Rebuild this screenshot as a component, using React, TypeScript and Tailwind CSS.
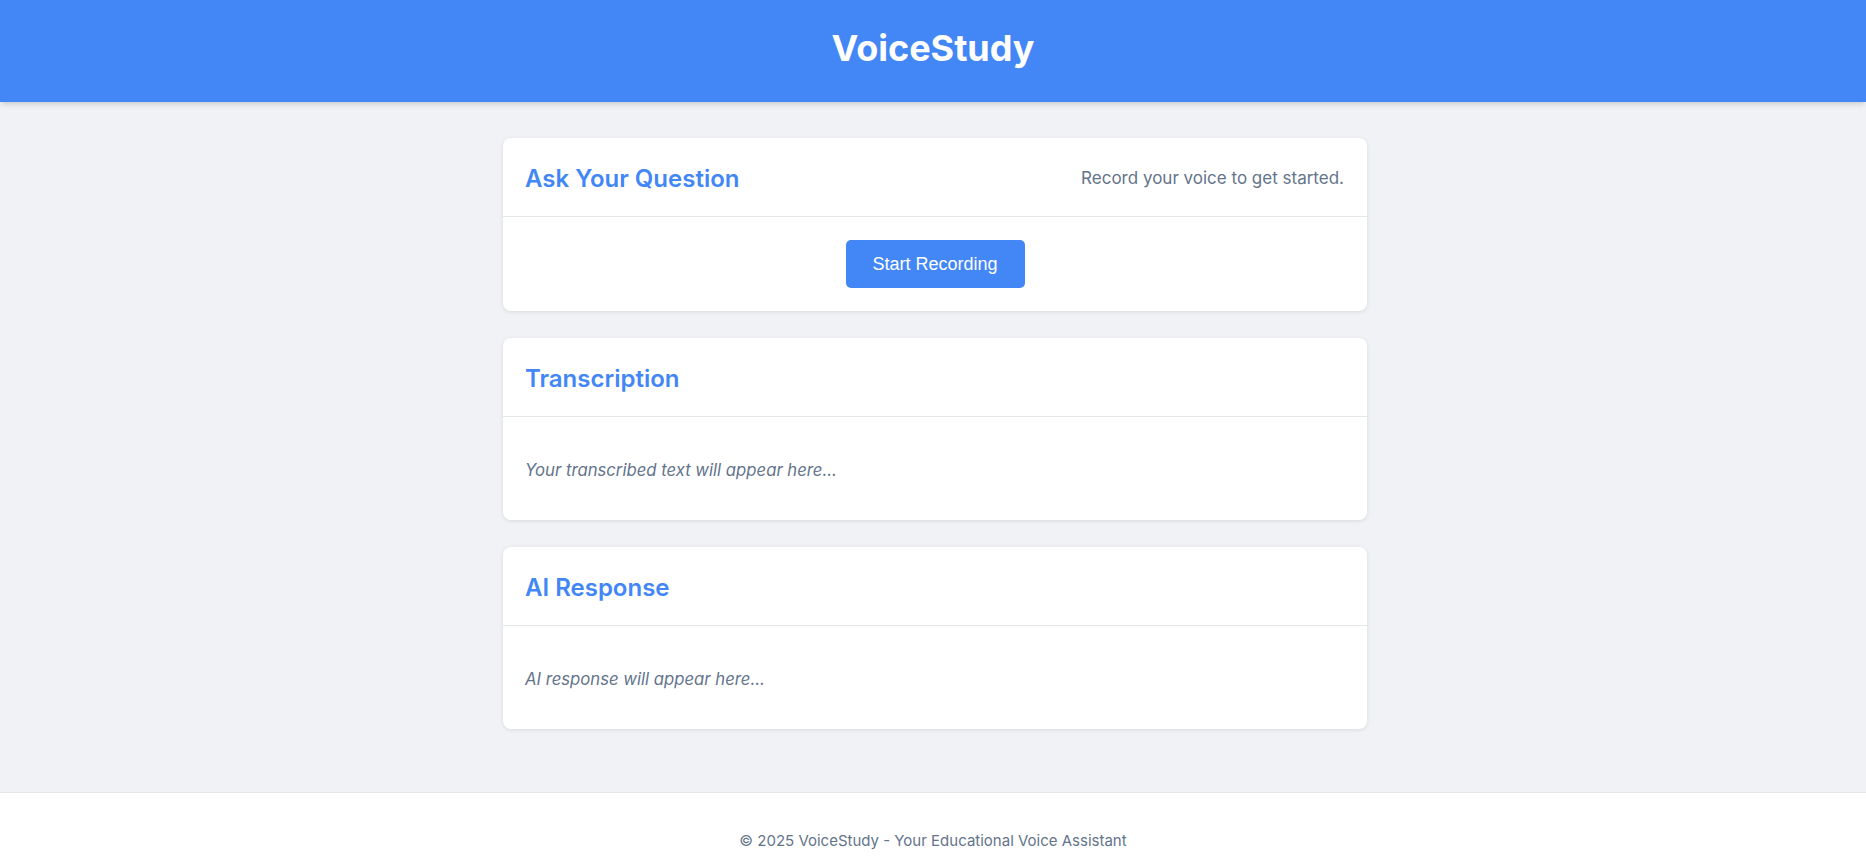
export default function App() {
  return (
    <div className="min-h-screen bg-[#f0f2f5] flex flex-col" style={{ fontFamily: 'Inter, "Noto Sans", sans-serif' }}>
      {/* Header */}
      <header className="h-[102px] bg-[#4287f5] flex items-center justify-center pb-[7px] shadow-md">
        <h1 className="text-[36px] font-bold text-white leading-none">VoiceStudy</h1>
      </header>

      {/* Main */}
      <main className="flex-1 pt-[36px] pb-[63px] pl-[4px]">
        <div className="w-[864px] mx-auto flex flex-col gap-[27px]">
          <Card title="Ask Your Question" aside="Record your voice to get started.">
            <div className="h-[94px] flex items-center justify-center">
              <button
                className="w-[179px] h-[48px] rounded-[5px] bg-[#4287f5] text-white text-[18px]"
                style={{ fontFamily: '"Liberation Sans", Arial, sans-serif' }}
              >
                Start Recording
              </button>
            </div>
          </Card>

          <Card title="Transcription">
            <div className="h-[103px] flex items-center pl-[22px] pr-6 pt-1">
              <p className="italic text-[16.7px] text-[#64748b]">Your transcribed text will appear here...</p>
            </div>
          </Card>

          <Card title="AI Response">
            <div className="h-[103px] flex items-center pl-[22px] pr-6 pt-1">
              <p className="italic text-[16.7px] text-[#64748b]">AI response will appear here...</p>
            </div>
          </Card>
        </div>
      </main>

      {/* Footer */}
      <footer className="bg-white border-t border-[#e5e7eb] h-[80px] flex justify-center pt-[38px]">
        <p className="text-[15px] text-[#64748b] leading-5">© 2025 VoiceStudy - Your Educational Voice Assistant</p>
      </footer>
    </div>
  );
}

function Card({ title, aside, children }: { title: string; aside?: string; children: React.ReactNode }) {
  return (
    <section className="bg-white rounded-lg shadow-[0_1px_4px_rgba(0,0,0,0.1)] overflow-hidden">
      <div className="h-[79px] pl-[22px] pr-[23px] pt-[3px] flex items-center justify-between border-b border-[#e5e7eb]">
        <h2 className="text-[24px] font-semibold text-[#4287f5]">{title}</h2>
        {aside && <span className="text-[17px] text-[#64748b]">{aside}</span>}
      </div>
      {children}
    </section>
  );
}
